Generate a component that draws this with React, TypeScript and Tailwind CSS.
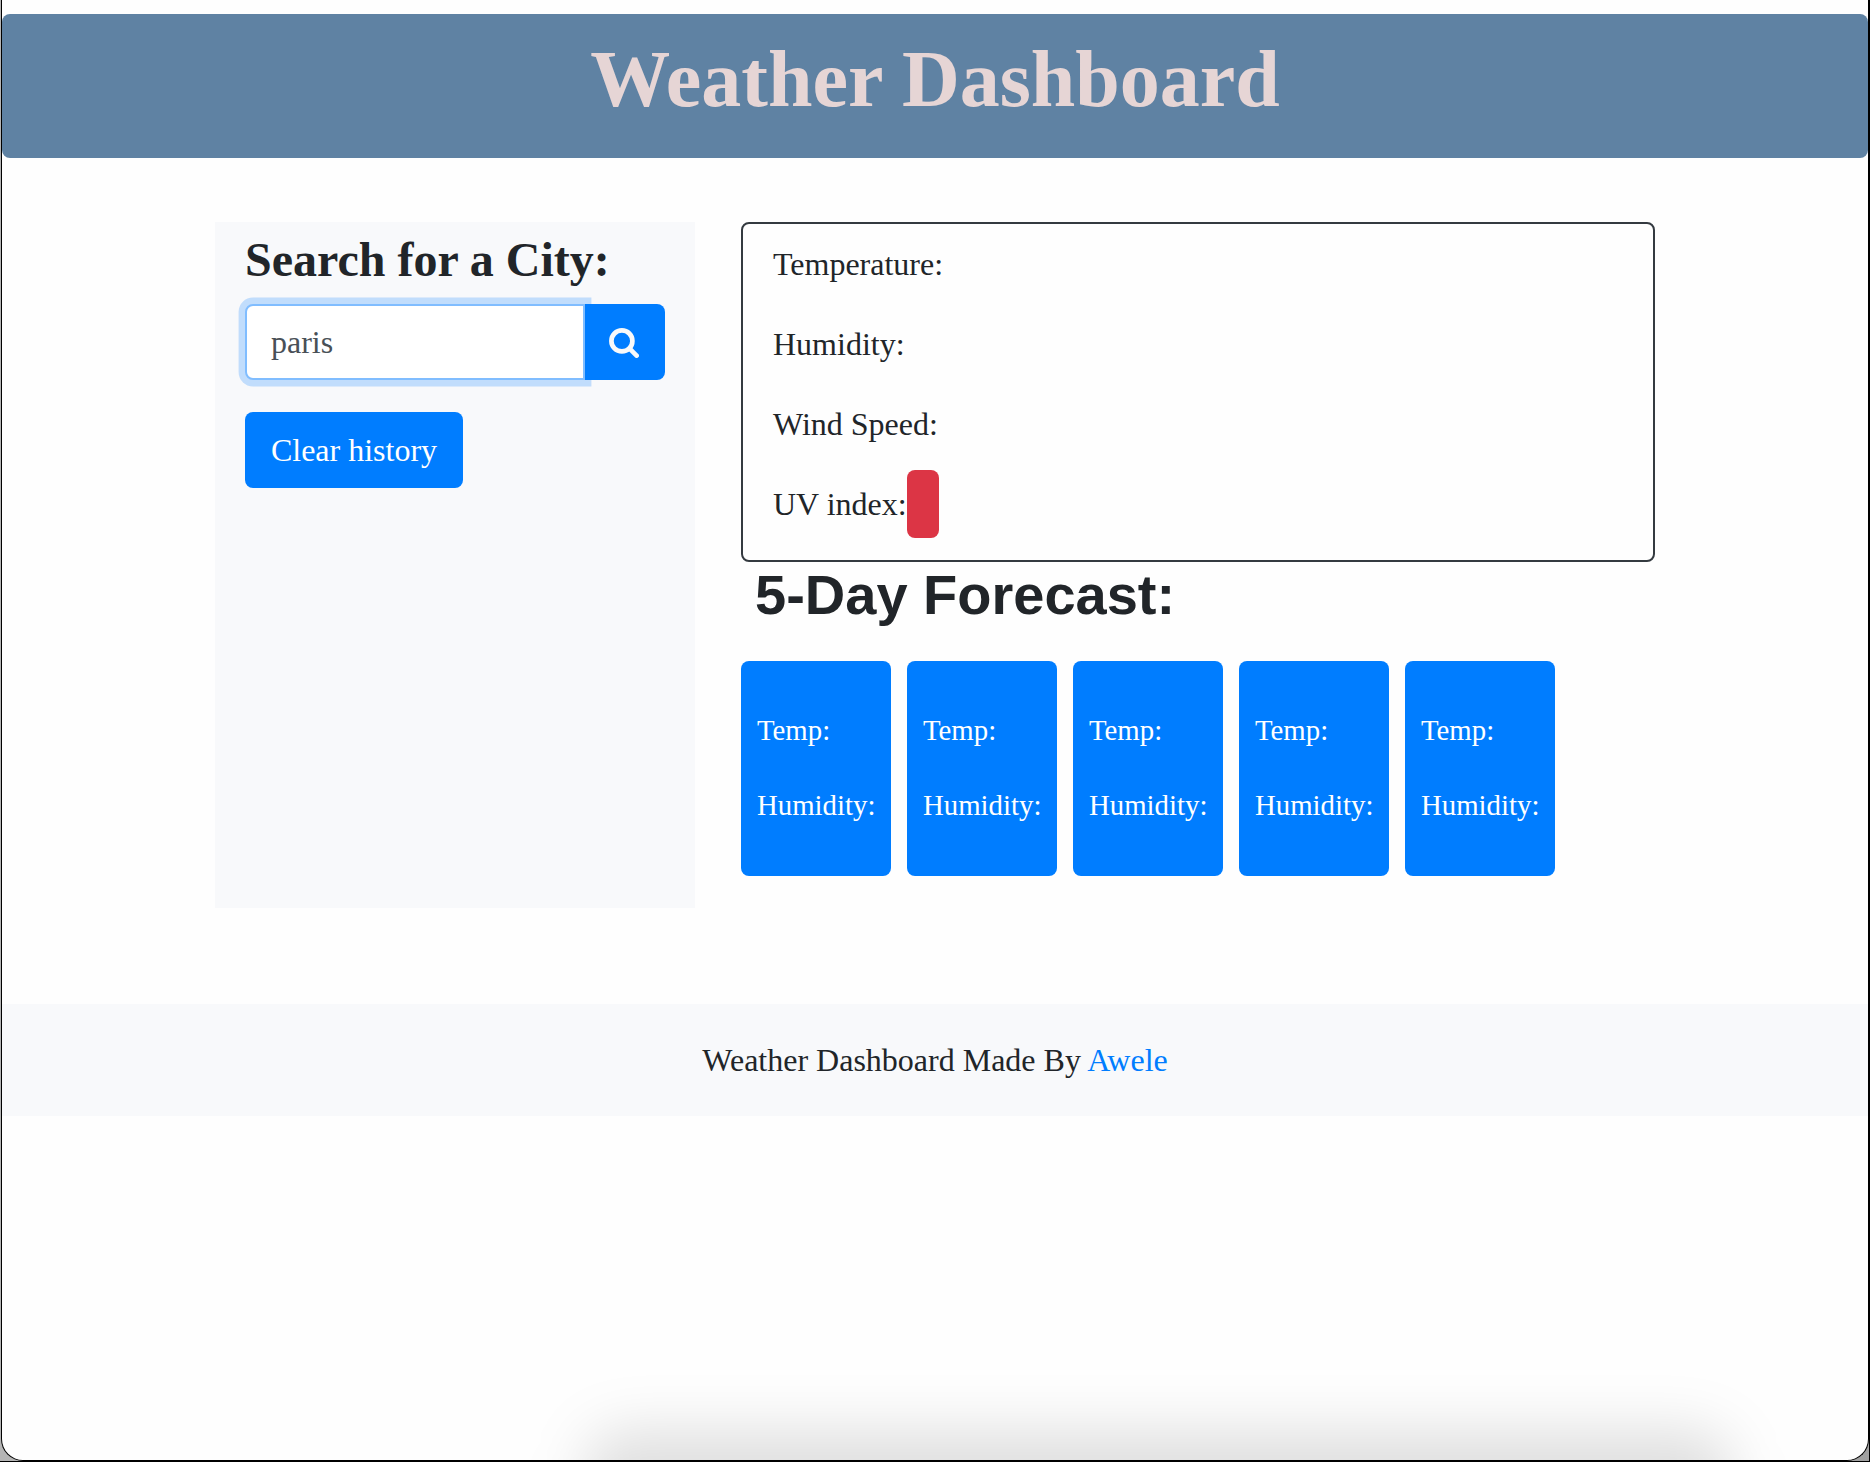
const readings = ["Temperature:", "Humidity:", "Wind Speed:"];
const days = [1, 2, 3, 4, 5];

function SearchIcon() {
  return (
    <svg viewBox="0 0 30 30" className="mt-px mr-0.5 h-[30px] w-[30px]" fill="none" stroke="#f8f9fa" aria-hidden="true">
      <circle cx="12.9" cy="12.9" r="10.5" strokeWidth="4.7" />
      <path d="M20.4 20.4 27.6 27.6" strokeWidth="4.7" strokeLinecap="round" />
    </svg>
  );
}

function Sidebar() {
  return (
    <aside className="w-[480px] bg-[#f8f9fb] px-[30px] pt-[9px]">
      <h2 className="mb-[15px] whitespace-nowrap text-[48px] leading-[58px] font-bold">Search for a City:</h2>
      <div className="flex h-[76px]">
        <input
          defaultValue="paris"
          aria-label="City"
          className="w-[340px] rounded-l-lg border-2 border-[#80bdff] bg-white pl-6 text-[32px] text-[#495057] shadow-[0_0_0_6.4px_rgba(0,123,255,0.22)] outline-none"
        />
        <button className="flex w-20 items-center justify-center rounded-r-lg bg-[#007dff]" aria-label="Search">
          <SearchIcon />
        </button>
      </div>
      <button className="mt-8 h-[76px] w-[218px] rounded-lg bg-[#007dff] text-[32px] whitespace-nowrap text-white">
        Clear history
      </button>
    </aside>
  );
}

function CurrentWeather() {
  return (
    <section className="flex h-[340px] flex-col gap-8 rounded-lg border-2 border-[#343a40] px-[30px] pt-4 text-[32px] leading-[48px]">
      {readings.map((label) => (
        <p key={label}>{label}</p>
      ))}
      <div className="flex h-12 items-center">
        <span className="w-[134px] whitespace-nowrap">UV index:</span>
        <span className="h-[68px] w-8 shrink-0 rounded-lg bg-[#dc3545]" />
      </div>
    </section>
  );
}

function Forecast() {
  return (
    <section>
      <h3 className="mb-[34px] pl-[14px] font-['Liberation_Sans',Arial,sans-serif] text-[56px] leading-[65px] font-bold">
        5-Day Forecast:
      </h3>
      <div className="flex gap-4">
        {days.map((day) => (
          <div
            key={day}
            className="flex h-[215px] w-[150px] flex-col gap-8 rounded-lg bg-[#007dff] px-4 pt-12 text-[28.8px] leading-[43.2px] whitespace-nowrap text-white"
          >
            <p>Temp:</p>
            <p>Humidity:</p>
          </div>
        ))}
      </div>
    </section>
  );
}

export default function App() {
  return (
    <div className="h-[1462px] w-[1870px] overflow-hidden border-r border-b border-black bg-linear-to-r from-[#b5b5b5] from-50% to-[#a0a0a0] to-100% font-['Liberation_Serif','Times_New_Roman',serif] text-[#212529]">
      <div className="ml-px h-[1461px] w-[1868px] overflow-hidden rounded-b-[22px] border-x border-b border-black bg-[#fefefe] pt-[14px]">
        <header className="h-36 rounded-lg bg-[#5f82a3] pt-[17px] text-center">
          <h1 className="text-[80px] leading-[96px] font-bold text-[#e6d5d5]">Weather Dashboard</h1>
        </header>
        <main className="mt-16 ml-[213px] flex h-[686px] gap-[46px]">
          <Sidebar />
          <div className="w-[914px]">
            <CurrentWeather />
            <Forecast />
          </div>
        </main>
        <footer className="mt-24 h-28 bg-[#f8f9fb] py-8 text-center text-[32px] leading-[48px]">
          Weather Dashboard Made By <a className="text-[#007dff]">Awele</a>
        </footer>
        <div className="mt-[314px] ml-[583px] h-40 w-[1147px] rounded-[40px] bg-black/12 blur-[28px]" />
      </div>
    </div>
  );
}
